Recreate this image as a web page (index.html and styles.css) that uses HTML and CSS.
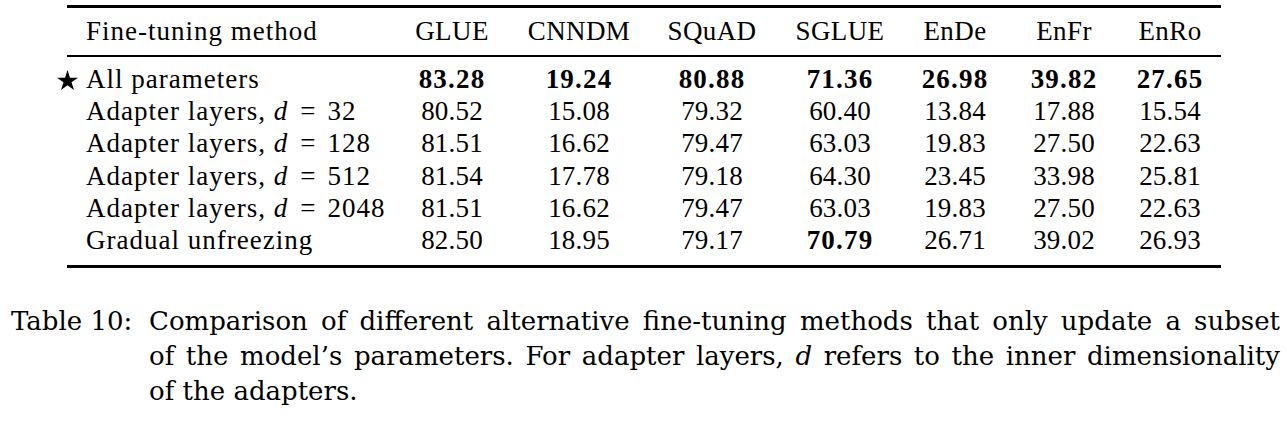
FILE: index.html
```html
<!DOCTYPE html>
<html lang="en">
<head>
<meta charset="utf-8">
<title>Table 10</title>
<link rel="stylesheet" href="styles.css">
</head>
<body>
<div class="page">
  <div class="table">
    <div class="row head">
      <div class="cell label">Fine-tuning method</div>
      <div class="cell">GLUE</div>
      <div class="cell">CNNDM</div>
      <div class="cell">SQuAD</div>
      <div class="cell">SGLUE</div>
      <div class="cell">EnDe</div>
      <div class="cell">EnFr</div>
      <div class="cell">EnRo</div>
    </div>
    <div class="tbody">
      <div class="row">
        <div class="cell label"><span class="star"><svg width="21" height="20" viewBox="0 0 21 20"><polygon points="10.5,0 12.98,7.63 21,7.63 14.51,12.34 16.99,19.97 10.5,15.26 4.01,19.97 6.49,12.34 0,7.63 8.02,7.63" fill="#000"/></svg></span>All parameters</div>
        <div class="cell num bold">83.28</div>
        <div class="cell num bold">19.24</div>
        <div class="cell num bold">80.88</div>
        <div class="cell num bold">71.36</div>
        <div class="cell num bold">26.98</div>
        <div class="cell num bold">39.82</div>
        <div class="cell num bold">27.65</div>
      </div>
      <div class="row">
        <div class="cell label">Adapter layers, <i class="var">d</i><span class="eq">=</span>32</div>
        <div class="cell num">80.52</div>
        <div class="cell num">15.08</div>
        <div class="cell num">79.32</div>
        <div class="cell num">60.40</div>
        <div class="cell num">13.84</div>
        <div class="cell num">17.88</div>
        <div class="cell num">15.54</div>
      </div>
      <div class="row">
        <div class="cell label">Adapter layers, <i class="var">d</i><span class="eq">=</span>128</div>
        <div class="cell num">81.51</div>
        <div class="cell num">16.62</div>
        <div class="cell num">79.47</div>
        <div class="cell num">63.03</div>
        <div class="cell num">19.83</div>
        <div class="cell num">27.50</div>
        <div class="cell num">22.63</div>
      </div>
      <div class="row">
        <div class="cell label">Adapter layers, <i class="var">d</i><span class="eq">=</span>512</div>
        <div class="cell num">81.54</div>
        <div class="cell num">17.78</div>
        <div class="cell num">79.18</div>
        <div class="cell num">64.30</div>
        <div class="cell num">23.45</div>
        <div class="cell num">33.98</div>
        <div class="cell num">25.81</div>
      </div>
      <div class="row">
        <div class="cell label">Adapter layers, <i class="var">d</i><span class="eq">=</span>2048</div>
        <div class="cell num">81.51</div>
        <div class="cell num">16.62</div>
        <div class="cell num">79.47</div>
        <div class="cell num">63.03</div>
        <div class="cell num">19.83</div>
        <div class="cell num">27.50</div>
        <div class="cell num">22.63</div>
      </div>
      <div class="row">
        <div class="cell label">Gradual unfreezing</div>
        <div class="cell num">82.50</div>
        <div class="cell num">18.95</div>
        <div class="cell num">79.17</div>
        <div class="cell num bold">70.79</div>
        <div class="cell num">26.71</div>
        <div class="cell num">39.02</div>
        <div class="cell num">26.93</div>
      </div>
    </div>
  </div>
  <div class="caption">
    <div class="cap-label">Table 10:</div>
    <div class="cap-text">
      <div class="line justify">Comparison of different alternative fine-tuning methods that only update a subset</div>
      <div class="line justify">of the model’s parameters. For adapter layers, <i class="cvar">d</i> refers to the inner dimensionality</div>
      <div class="line">of the adapters.</div>
    </div>
  </div>
</div>
</body>
</html>
```

FILE: styles.css
```css
html, body { margin: 0; padding: 0; background: #fff; }
body { color: #000; width: 1287px; height: 426px; overflow: hidden; font-family: "Tinos", "Liberation Serif", serif; }

.page {
  padding-top: 5px;
}

.table {
  margin-left: 67px;
  width: 1154px;
  border-top: 3px solid #000;
  border-bottom: 3px solid #000;
  font-size: 27px;
}

.row {
  display: grid;
  grid-template-columns: 333px 104px 150px 116px 140px 90px 128px 84px;
  line-height: 32.2px;
  height: 32.2px;
}

.head {
  height: auto;
  line-height: 32px;
  padding: 7px 0 8px;
  border-bottom: 2px solid #000;
  letter-spacing: 0.4px;
}

.tbody {
  padding: 6px 0 9px;
}

.cell {
  text-align: center;
  white-space: nowrap;
}

.cell.label {
  text-align: left;
  padding-left: 19px;
  letter-spacing: 1px;
}

.num {
  letter-spacing: 0.2px;
}

.bold {
  font-weight: bold;
  letter-spacing: 1.2px;
}

.star {
  display: inline-block;
  width: 29px;
  margin-left: -29px;
  vertical-align: -2px;
  line-height: 0;
}

.star svg {
  display: block;
}

.var {
  font-style: italic;
  letter-spacing: 0;
}

.eq {
  display: inline-block;
  margin: 0 11px 0 13px;
}

.caption {
  display: flex;
  margin-top: 36px;
  padding-left: 11px;
  font-family: "DejaVu Serif", serif;
  font-size: 26px;
  line-height: 35px;
}

.cap-label {
  width: 138px;
  flex: none;
  white-space: nowrap;
}

.cap-text {
  width: 1131px;
  flex: none;
}

.line {
  white-space: nowrap;
}

.line.justify {
  text-align: justify;
  text-align-last: justify;
}

.cvar {
  font-style: italic;
}
```
